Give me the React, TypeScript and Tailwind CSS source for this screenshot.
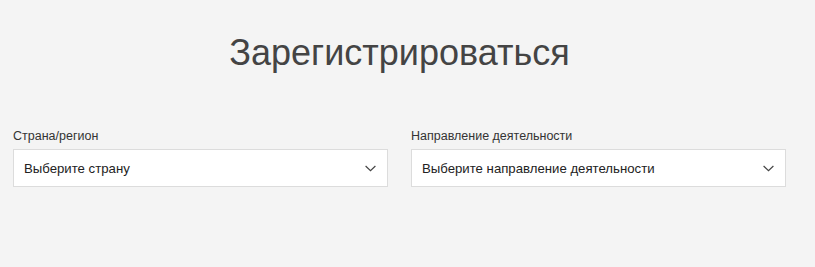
import React from "react";

function Chevron() {
  return (
    <svg width="11" height="7" viewBox="0 0 11 7" fill="none" className="shrink-0">
      <path d="M0.6 1 L5.5 5.6 L10.4 1" stroke="#444" strokeWidth="1.2" />
    </svg>
  );
}

function Field({ label, placeholder }: { label: string; placeholder: string }) {
  return (
    <div className="flex flex-col">
      <div className="text-[12.5px] leading-[16px] text-[#333] mb-[5px]">{label}</div>
      <div className="h-[38px] bg-white border border-[#dcdcdc] flex items-center justify-between pl-[10px] pr-[11px]">
        <span className="text-[13.2px] leading-[16px] text-[#222] pt-[1px]">{placeholder}</span>
        <Chevron />
      </div>
    </div>
  );
}

export default function App() {
  return (
    <div
      className="w-[815px] h-[267px] bg-[#f4f4f4]"
      style={{ fontFamily: '"Liberation Sans", Arial, sans-serif' }}
    >
      <div className="w-[773px] ml-[13px] pt-[31px]">
        <h1 className="text-center text-[36px] leading-[44px] text-[#444] font-normal">
          Зарегистрироваться
        </h1>
        <div className="grid grid-cols-[375px_375px] gap-[23px] mt-[53px]">
          <Field label="Страна/регион" placeholder="Выберите страну" />
          <Field label="Направление деятельности" placeholder="Выберите направление деятельности" />
        </div>
      </div>
    </div>
  );
}
